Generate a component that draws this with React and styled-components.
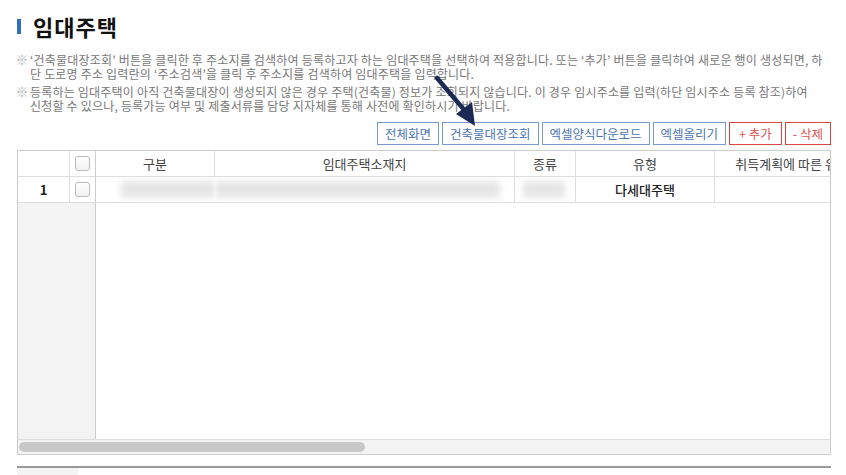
import React from 'react'
import styled, { createGlobalStyle } from 'styled-components'

const GlobalStyle = createGlobalStyle`
  body {
    margin: 0;
    background: #fff;
    font-family: 'Noto Sans CJK KR', 'Noto Sans', sans-serif;
    color: #333;
  }
`

//layout
const Page = styled.div`
  position: relative;
  width: 846px;
  height: 475px;
  padding: 0 15px 0 17px;
  box-sizing: border-box;
  overflow: hidden;
`

const Title = styled.h2`
  display: flex;
  align-items: center;
  gap: 12px;
  margin: 0;
  padding-top: 10px;
  height: 32px;
  font-size: 22px;
  font-weight: 700;
  color: #111;
  letter-spacing: 1px;
  &::before {
    content: '';
    width: 4px;
    height: 15px;
    background: #2f6fc0;
  }
`

const Notes = styled.ul`
  list-style: none;
  margin: 11px 0 0;
  padding: 0;
`

const Note = styled.li`
  position: relative;
  padding-left: 13px;
  margin-bottom: 4px;
  font-size: 12px;
  line-height: 14px;
  color: #777;
  letter-spacing: 0.2px;
  white-space: nowrap;
  &::before {
    content: '※';
    position: absolute;
    left: -1px;
    color: #aaa;
  }
`

const Toolbar = styled.div`
  display: flex;
  justify-content: flex-end;
  gap: 3px;
  margin-top: 9px;
`

const Button = styled.button`
  margin: 0;
  height: 23px;
  padding: 0 ${(p) => p.$pad || 7}px;
  background: #fff;
  border: 1px solid ${(p) => (p.$danger ? '#d44' : '#7a9ccc')};
  color: ${(p) => (p.$danger ? '#e05050' : '#4a74b4')};
  font-family: inherit;
  font-size: 12.5px;
  letter-spacing: 0;
  line-height: 21px;
  cursor: pointer;
`

const Grid = styled.div`
  display: flex;
  flex-direction: column;
  margin-top: 5px;
  width: 814px;
  height: 305px;
  border: 1px solid #ccc;
  box-sizing: border-box;
  overflow: hidden;
`

const Row = styled.div`
  display: grid;
  grid-template-columns: 52px 26px 119px 300px 61px 139px 155px;
  height: 26px;
  flex: none;
`

const Cell = styled.div`
  display: flex;
  align-items: center;
  justify-content: ${(p) => p.$align || 'center'};
  border-right: 1px solid #ddd;
  border-bottom: 1px solid #ddd;
  font-size: 13px;
  color: ${(p) => (p.$head ? '#444' : '#222')};
  font-weight: ${(p) => p.$weight || 400};
  white-space: nowrap;
  overflow: hidden;
  background: #fff;
  &:nth-child(2) {
    border-right-color: #ccc;
  }
`

const Check = styled.span`
  width: 13px;
  height: 13px;
  border: 1px solid #bbb;
  border-radius: 3px;
  background: linear-gradient(#fff, #f1f1f1);
`

const Blur = styled.div`
  width: ${(p) => p.$w}px;
  height: 17px;
  margin-left: ${(p) => p.$ml || 0}px;
  background: #e6e6e6;
  filter: blur(3px);
`

const Filler = styled.div`
  flex: 1;
  display: grid;
  grid-template-columns: 78px 1fr;
  & > :first-child {
    background: #f3f3f3;
    border-right: 1px solid #ccc;
  }
`

const Track = styled.div`
  height: 15px;
  flex: none;
  background: #f3f3f3;
  border-top: 1px solid #ddd;
  padding: 2px 1px;
  box-sizing: border-box;
`

const Thumb = styled.div`
  width: 346px;
  height: 10px;
  border-radius: 5px;
  background: #c8c8c8;
`

const Footer = styled.div`
  margin-top: 11px;
  width: 814px;
  border-top: 2px solid #999;
  &::after {
    content: '';
    display: block;
    width: 61px;
    height: 10px;
    background: #f4f4f4;
  }
`

const Arrow = styled.svg`
  position: absolute;
  left: 430px;
  top: 72px;
`

const columns = ['구분', '임대주택소재지', '종류', '유형', '취득계획에 따른 유형']

const App = () => (
  <Page>
    <GlobalStyle />
    <Title>임대주택</Title>
    <Notes>
      <Note>
        ‘건축물대장조회’ 버튼을 클릭한 후 주소지를 검색하여 등록하고자 하는 임대주택을 선택하여 적용합니다. 또는 ‘추가’ 버튼을 클릭하여 새로운 행이 생성되면, 하
        <br />
        단 도로명 주소 입력란의 ‘주소검색’을 클릭 후 주소지를 검색하여 임대주택을 입력합니다.
      </Note>
      <Note>
        등록하는 임대주택이 아직 건축물대장이 생성되지 않은 경우 주택(건축물) 정보가 조회되지 않습니다. 이 경우 임시주소를 입력(하단 임시주소 등록 참조)하여
        <br />
        신청할 수 있으나, 등록가능 여부 및 제출서류를 담당 지자체를 통해 사전에 확인하시기 바랍니다.
      </Note>
    </Notes>
    <Toolbar>
      <Button>전체화면</Button>
      <Button>건축물대장조회</Button>
      <Button>엑셀양식다운로드</Button>
      <Button>엑셀올리기</Button>
      <Button $danger $pad={9}>+ 추가</Button>
      <Button $danger>- 삭제</Button>
    </Toolbar>
    <Grid>
      <Row>
        <Cell $head />
        <Cell $head>
          <Check />
        </Cell>
        {columns.map((c) => (
          <Cell $head key={c}>
            {c}
          </Cell>
        ))}
      </Row>
      <Row>
        <Cell $weight={700}>1</Cell>
        <Cell>
          <Check />
        </Cell>
        <Cell $align="flex-start" style={{ borderRight: 'none' }}>
          <Blur $w={119} $ml={25} />
        </Cell>
        <Cell $align="flex-start">
          <Blur $w={285} />
        </Cell>
        <Cell $align="flex-start">
          <Blur $w={42} $ml={8} />
        </Cell>
        <Cell $weight={500}>다세대주택</Cell>
        <Cell />
      </Row>
      <Filler>
        <div />
        <div />
      </Filler>
      <Track>
        <Thumb />
      </Track>
    </Grid>
    <Footer />
    <Arrow width="60" height="60" viewBox="0 0 60 60">
      <line x1="7" y1="6" x2="36" y2="40" stroke="#1b2a55" strokeWidth="4.5" strokeLinecap="round" />
      <polygon points="26,42 42,30 45,54" fill="#1b2a55" />
    </Arrow>
  </Page>
)

export default App
